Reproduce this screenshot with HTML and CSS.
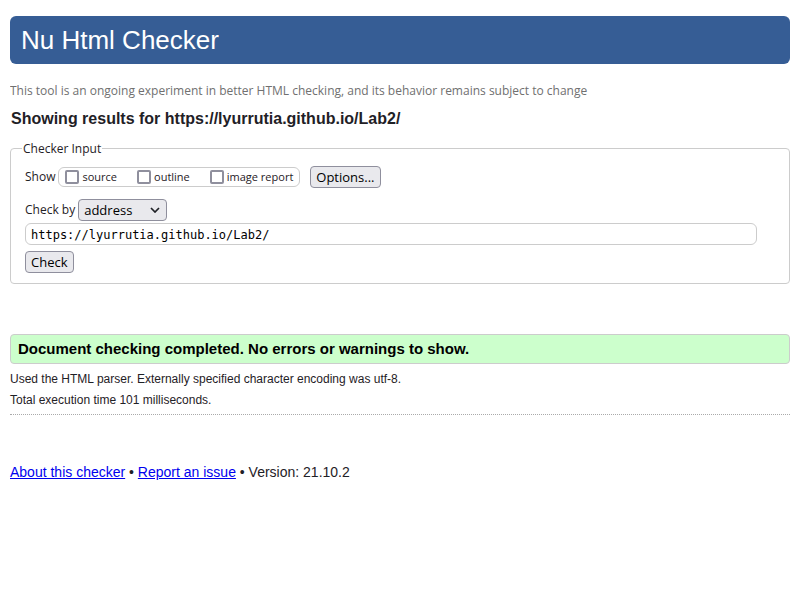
FILE: index.html
```html
<!DOCTYPE html>
<html lang="en">
<head>
<meta charset="utf-8">
<title>Showing results for https://lyurrutia.github.io/Lab2/</title>
<link rel="stylesheet" href="styles.css">
</head>
<body>
<header class="banner"><h1 class="banner-title">Nu Html Checker</h1></header>
<main>
<p class="notice">This tool is an ongoing experiment in better HTML checking, and its behavior remains subject to change</p>
<h2 class="heading">Showing results for https://lyurrutia.github.io/Lab2/</h2>
<form class="form">
<fieldset class="panel">
<legend class="legend">Checker Input</legend>
<div class="row row-show">
<span>Show</span>
<div class="checks">
<label class="check"><input class="box" type="checkbox">source</label>
<label class="check"><input class="box" type="checkbox">outline</label>
<label class="check"><input class="box" type="checkbox">image report</label>
</div>
<button class="button" type="button">Options...</button>
</div>
<div class="row row-method">
<label for="method">Check by</label>
<span class="select-wrap">
<select class="button select" id="method"><option>address</option><option>file upload</option><option>text input</option></select>
<svg class="chevron" viewBox="0 0 10 6" aria-hidden="true"><path d="M1 1l4 4 4-4" fill="none" stroke="currentColor" stroke-width="1.7"/></svg>
</span>
</div>
<input class="address" type="text" aria-label="Address" value="https://lyurrutia.github.io/Lab2/">
<button class="button submit" type="button">Check</button>
</fieldset>
</form>
<p class="success">Document checking completed. No errors or warnings to show.</p>
<div class="details">
<p>Used the HTML parser. Externally specified character encoding was utf-8.</p>
<p>Total execution time 101 milliseconds.</p>
</div>
</main>
<footer class="footer"><a href="#about">About this checker</a> • <a href="#issue">Report an issue</a> • Version: 21.10.2</footer>
</body>
</html>
```
FILE: styles.css
```css
* { box-sizing: border-box; }
body {
  margin: 16px 11px 0 10px;
  background: #fff;
  color: #1f2126;
  font: 14px/20px "Liberation Sans", Arial, sans-serif;
}
h1, h2, p { margin: 0; }
.banner {
  padding: 8px 11px;
  border-radius: 6px;
  background: #365d95;
  color: #fff;
}
.banner-title { font-size: 26px; line-height: 32px; font-weight: 400; }
.notice {
  margin-top: 17px;
  color: #707070;
  font: 12px/20px "Open Sans", sans-serif;
}
.heading { margin: 8px 0 0 1px; font-size: 16px; line-height: 20px; }
.form { margin-top: 10px; font: 12px/20px "Open Sans", sans-serif; }
.panel {
  margin: 0;
  padding: 8px 32px 10px 14px;
  border: 1px solid #ccc;
  border-radius: 4px;
}
.legend { margin-left: -3px; padding: 0 1px; line-height: 19px; }
.row { display: flex; align-items: center; gap: 3px; }
.checks {
  display: flex;
  gap: 20px;
  height: 20px;
  padding: 0 6px;
  border: 1px solid #ccc;
  border-radius: 6px;
  font-size: 11px;
}
.check { display: flex; align-items: center; gap: 3px; }
.box {
  appearance: none;
  width: 14px;
  height: 14px;
  margin: 0;
  border: 2px solid #8f8f9d;
  border-radius: 2px;
  background: #fff;
}
.box:checked { background: #365d95; }
.button {
  height: 22px;
  padding: 0 5px;
  border: 1px solid #8f8f9d;
  border-radius: 4px;
  background: #e9e9ed;
  color: #000;
  font: 13px/18px "Open Sans", sans-serif;
}
.row-show .button { margin-left: 7px; }
.row-method { margin-top: 11px; }
.select-wrap { display: grid; align-items: center; }
.select { appearance: none; grid-area: 1 / 1; width: 89px; }
.chevron {
  grid-area: 1 / 1;
  justify-self: end;
  width: 10px;
  height: 6px;
  margin-right: 7px;
  pointer-events: none;
}
.address {
  display: block;
  width: 100%;
  height: 22px;
  margin: 2px 0 6px;
  padding: 1px 5px 0;
  border: 1px solid #ccc;
  border-radius: 6px;
  color: #000;
  font: 12px/18px "DejaVu Sans Mono", monospace;
}
.submit { display: block; }
.success {
  margin-top: 50px;
  padding: 4px 7px;
  border: 1px solid #ccc;
  border-radius: 4px;
  background: #cfc;
  color: #000;
  font-size: 15px;
  font-weight: 700;
}
.details {
  margin-top: 5px;
  padding-bottom: 3px;
  border-bottom: 1px dotted #aaa;
  font-size: 12px;
  line-height: 21px;
}
.footer { margin-top: 47px; }
.footer a { color: #00e; }
```
